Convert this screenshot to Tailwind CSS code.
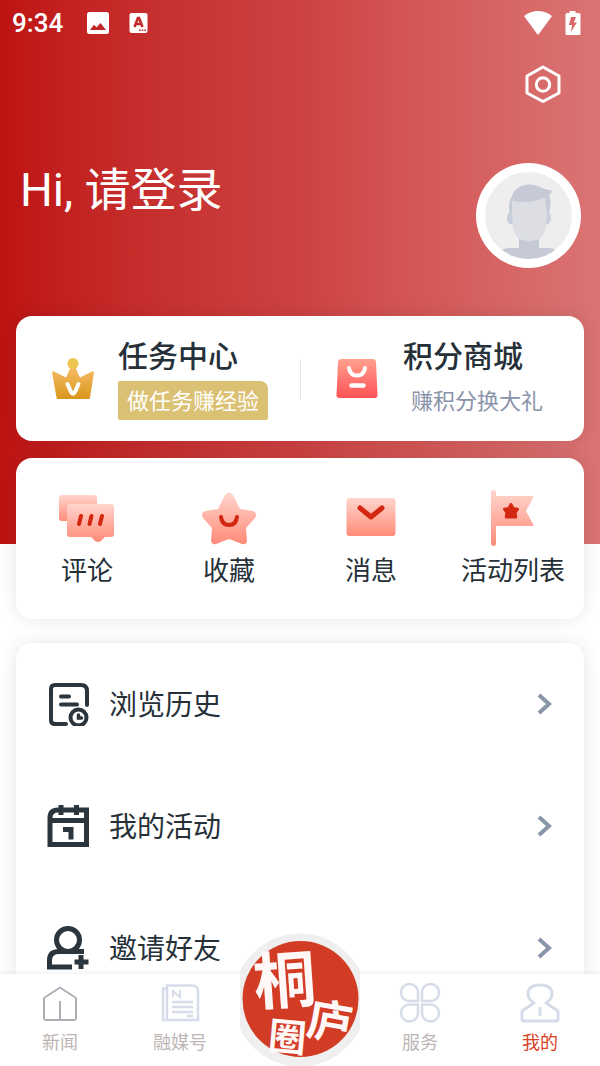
<!DOCTYPE html>
<html lang="zh-CN">
<head>
<meta charset="utf-8">
<meta name="viewport" content="width=device-width, initial-scale=1">
<title>我的</title>
<script src="https://cdn.jsdelivr.net/npm/@tailwindcss/browser@4"></script>
</head>
<body class="flex h-screen flex-col overflow-hidden bg-white font-['Roboto','Noto_Sans_CJK_SC',sans-serif] text-[#263038]">
<main class="min-h-0 flex-1 overflow-y-auto [scrollbar-width:none]">
  <header class="bg-linear-to-r from-[#be1212] via-[#cd4242] to-[#da7474] px-4 pb-[103px] text-white">
    <div class="flex h-[46px] items-center justify-between">
      <div class="flex items-center">
        <time class="-ml-1 w-[75px] text-[26px] leading-8 font-medium">9:34</time>
        <svg class="h-[22px] w-[22px]" viewBox="0 0 22 22" aria-hidden="true"><path fill="#fff" fill-rule="evenodd" d="M2.5 0h17A2.5 2.5 0 0 1 22 2.500v17a2.500 2.500 0 0 1-2.500 2.500h-17A2.500 2.500 0 0 1 0 19.500v-17A2.500 2.500 0 0 1 2.500 0ZM3 18h16l-5.500-7-4 4.500-2.500-2.700Z"/></svg>
        <svg class="ml-5 h-5 w-[19px]" viewBox="0 0 19 20" aria-hidden="true"><rect x=".5" width="18" height="20" rx="2" fill="#fff"/><path fill="none" stroke="#c62b2b" stroke-width="2.600" d="m5.500 14 3.400-9h1.200l3.400 9M7 11h5"/><path stroke="#c62b2b" stroke-width="1.500" stroke-dasharray="1.700 1" d="M10 17.300h7"/></svg>
      </div>
      <div class="flex items-center gap-3 pr-1">
        <svg class="h-6 w-[30px]" viewBox="0 0 30 24" aria-hidden="true"><path fill="#fff" d="M1 5C9-1.700 21-1.700 29 5L15.500 23.500h-1Z"/></svg>
        <svg class="h-6 w-4 -mr-px" viewBox="1 0 16 24" aria-hidden="true"><path fill="#fff" d="M5.500 0h6v2H15a1.500 1.500 0 0 1 1.500 1.500v19A1.500 1.500 0 0 1 15 24H3a1.500 1.500 0 0 1-1.500-1.500v-19A1.500 1.500 0 0 1 3 2h2.500Z"/><path fill="#d66" d="M7 6h5l-2.200 5.500H13L6.800 21l1.400-7H5Z"/></svg>
      </div>
    </div>
    <div class="flex justify-end pt-[18px] pr-[23px]">
      <button type="button" aria-label="设置" class="h-10 w-9"><svg class="h-10 w-9" viewBox="0 0 36 40" fill="none" stroke="#fff" stroke-width="3" stroke-linejoin="round" aria-hidden="true"><path d="M18 3 34 12v17L18 37.500 2 29V12Z"/><circle cx="18" cy="20.500" r="6.700"/></svg></button>
    </div>
    <div class="flex items-start justify-between pt-[59px] pl-1 pr-[3px]">
      <h1><a href="#login" class="block text-[46px] leading-[54px]">Hi, 请登录</a></h1>
      <a href="#profile" aria-label="个人资料">
        <svg class="h-[105px] w-[105px]" viewBox="0 0 105 105" aria-hidden="true">
          <clipPath id="face"><circle cx="52.500" cy="52.500" r="43.500"/></clipPath>
          <circle cx="52.500" cy="52.500" r="52.500" fill="#fff"/>
          <g clip-path="url(#face)"><rect width="105" height="105" fill="#eee"/>
          <path fill="#c5cad6" d="M43 74h20v11h9q9 0 14 7v13H20V92q5-7 14-7h9Z"/>
          <ellipse cx="35" cy="55" rx="4" ry="6.500" fill="#c9cfdd"/><ellipse cx="71" cy="55" rx="4" ry="6.500" fill="#c9cfdd"/>
          <path fill="#c5cad6" d="M34 50q-3-10 3-18-1-3 5-7 11-7 24 0 4 2 6 2l3 0q2 3-2 5 3 7 0 18Z"/>
          <path fill="#dcdee3" d="M36 37q18 4 33-3l2 15-1 16q-3 13-17 13-13 0-16-13l-1-15Z"/>
          <path fill="#c5cad6" d="M36 38q-2-5 5-12 11-8 24-1 4 2 8 2 1 5-6 8-14 6-31 3Z"/></g>
        </svg>
      </a>
    </div>
    <section class="mt-12 grid h-[125px] grid-cols-2 items-center rounded-2xl bg-white shadow-[0_0_18px_#0000001a]">
      <a href="#tasks" class="flex h-full items-center gap-6 pl-9">
        <svg class="h-[42px] w-[42px] shrink-0" viewBox="0 0 42 42" aria-hidden="true"><defs><linearGradient id="gold" x2="0" y2="1"><stop stop-color="#f6bd66"/><stop offset="1" stop-color="#da961c"/></linearGradient></defs><path fill="url(#gold)" d="M0 14q0-1 2-.5l12 6q4-8 4-10h6q0 2 4 10l12-6q2-.5 2 1l-4 25q0 1.500-1.500 1.500h-31Q4.500 41 4.500 39.500Z"/><circle cx="21" cy="5.500" r="5.500" fill="#edc550"/><path fill="none" stroke="#fff" stroke-width="4" stroke-linecap="round" stroke-linejoin="round" d="m15.500 26 3.500 8q2 3.500 4 0l3.500-8"/></svg>
        <div class="text-[#263038]">
          <h2 class="text-[30px] leading-10 font-medium">任务中心</h2>
          <p class="mt-1 flex h-[39px] w-[150px] items-center justify-center rounded-xs rounded-tr-lg bg-[#dbc173] pt-0.5 text-[22px] whitespace-nowrap text-white">做任务赚经验</p>
        </div>
      </a>
      <a href="#mall" class="relative flex h-full items-center gap-[25px] pl-9 before:absolute before:left-0 before:h-10 before:w-px before:bg-[#e6e6e6]">
        <svg class="h-[42px] w-[42px] shrink-0" viewBox="0 0 42 42" aria-hidden="true"><defs><linearGradient id="bag" x2="0" y2="1"><stop stop-color="#ffa08d"/><stop offset="1" stop-color="#ff5156"/></linearGradient></defs><path fill="url(#bag)" d="M5 1h32q2.500 0 3 3l1.500 33q0 3-2.500 3H3q-2.500 0-2.500-3L2 4q.5-3 3-3Z"/><path fill="none" stroke="#fff" stroke-width="4" stroke-linecap="round" d="M13 10q1 7.500 8 7.500t8-7.500"/><path stroke="#fff" stroke-width="4.500" stroke-linecap="round" d="M15.500 27.500h12"/></svg>
        <div>
          <h2 class="text-[30px] leading-10 font-medium text-[#263038]">积分商城</h2>
          <p class="mt-1 flex h-[39px] items-center pt-0.5 pl-2 text-[22px] whitespace-nowrap text-[#8993a9]">赚积分换大礼</p>
        </div>
      </a>
    </section>
  </header>

  <div class="-mt-[86px] px-4">
    <nav aria-label="快捷入口" class="grid h-[161px] grid-cols-4 rounded-2xl bg-white pt-8 shadow-[0_0_18px_#0000001a]">
      <a href="#comments" class="flex flex-col items-center">
        <svg class="h-14 w-14" viewBox="0 0 56 56" aria-hidden="true"><defs><linearGradient id="coral" x2="0" y2="1"><stop stop-color="#ffd5cd"/><stop offset="1" stop-color="#ff8b78"/></linearGradient></defs><rect x="0" y="5" width="38" height="26" rx="3" fill="url(#coral)"/><path fill="url(#coral)" d="M11 14h41q3 0 3 3v27q0 3-3 3h-6l-4 4q-3 2-6 0l-4-4H11q-3 0-3-3V17q0-3 3-3Z"/><path stroke="#d4270f" stroke-width="4" stroke-linecap="round" d="m20 34 2-8M30.500 34l2-8M41 34l2-8"/></svg>
        <span class="text-[26px] leading-[50px] whitespace-nowrap">评论</span>
      </a>
      <a href="#favorites" class="flex flex-col items-center">
        <svg class="h-14 w-14" viewBox="0 0 56 56" aria-hidden="true"><path fill="url(#coral)" d="M24 5q4-5 8 0l7 14 13 2q5 2 2 7l-9 10 1 13q-1 4-5 3l-13-5-13 5q-4 1-5-3l1-13-9-10q-3-5 2-7l13-2Z"/><path fill="none" stroke="#d4270f" stroke-width="4" stroke-linecap="round" d="M20 27q1 8 8 8t8-8"/></svg>
        <span class="text-[26px] leading-[50px] whitespace-nowrap">收藏</span>
      </a>
      <a href="#messages" class="flex flex-col items-center">
        <svg class="h-14 w-14" viewBox="0 0 56 56" aria-hidden="true"><rect x="3.500" y="8" width="49" height="38" rx="3" fill="url(#coral)"/><path fill="none" stroke="#d4270f" stroke-width="5" stroke-linecap="round" stroke-linejoin="round" d="m17 18 11 9 11-9"/></svg>
        <span class="text-[26px] leading-[50px] whitespace-nowrap">消息</span>
      </a>
      <a href="#events" class="flex flex-col items-center">
        <svg class="h-14 w-14" viewBox="0 0 56 56" aria-hidden="true"><path fill="url(#coral)" d="M6 3q0-3 2.500-3T11 3v3h36q2.500 0 1 2l-7 13 7 13q1.500 2-1 2H11v17q0 3-2.500 3T6 53Z"/><path fill="#d4270f" stroke="#d4270f" stroke-width="3" stroke-linejoin="round" d="m26 14.500 2 4 4.500.7-2.500 3.300.7 4.500h-9.400l.7-4.500-2.500-3.300 4.500-.7Z"/></svg>
        <span class="text-[26px] leading-[50px] whitespace-nowrap">活动列表</span>
      </a>
    </nav>

    <ul class="mt-6 rounded-2xl bg-white shadow-[0_0_18px_#0000001a]">
      <li><a href="#history" class="flex h-[122px] items-center pr-[31px] pl-[31px]">
        <svg class="h-11 w-11" viewBox="0 0 44 44" fill="none" stroke="#2b353d" stroke-width="4" stroke-linecap="round" aria-hidden="true"><path d="M40 23V9q0-6-6-6H8Q4 3 4 7v31q0 4 4 4h11M14 14.500h8M14 22.500h16"/><circle cx="31.500" cy="35.500" r="8"/><path stroke-width="3.500" d="M31.500 33v3h3"/></svg>
        <span class="ml-[18px] flex-1 pt-1 text-[28px]">浏览历史</span>
        <svg class="h-6 w-4" viewBox="0 0 16 24" fill="none" stroke="#8995a9" stroke-width="4" aria-hidden="true"><path d="m2 3 10 9-10 9"/></svg>
      </a></li>
      <li><a href="#my-events" class="flex h-[122px] items-center pr-[31px] pl-[31px]">
        <svg class="h-11 w-11" viewBox="0 0 44 44" fill="none" stroke="#2b353d" stroke-width="5" aria-hidden="true"><path d="M3 41V14q0-8 8-8h28.500v34.500H3V16.500h36M14 1v10M29.500 1v10M16 25.500h8v10"/></svg>
        <span class="ml-[18px] flex-1 pt-1 text-[28px]">我的活动</span>
        <svg class="h-6 w-4" viewBox="0 0 16 24" fill="none" stroke="#8995a9" stroke-width="4" aria-hidden="true"><path d="m2 3 10 9-10 9"/></svg>
      </a></li>
      <li><a href="#invite" class="flex h-[122px] items-center pr-[31px] pl-[31px]">
        <svg class="h-11 w-11" viewBox="0 0 44 44" fill="none" stroke="#2b353d" stroke-width="5" aria-hidden="true"><circle cx="21" cy="14" r="11.500"/><path d="M37 25.500H12q-9 0-9.500 8V41H25M34 29v14M27.500 36h14"/></svg>
        <span class="ml-[18px] flex-1 pt-1 text-[28px]">邀请好友</span>
        <svg class="h-6 w-4" viewBox="0 0 16 24" fill="none" stroke="#8995a9" stroke-width="4" aria-hidden="true"><path d="m2 3 10 9-10 9"/></svg>
      </a></li>
    </ul>
  </div>
</main>

<nav aria-label="主导航" class="relative grid h-[92px] shrink-0 grid-cols-5 bg-white pt-2 text-[18px] leading-7 text-[#bdb5b5] shadow-[0_-2px_4px_#0000000d]">
  <a href="#news" class="flex flex-col items-center gap-[5px]">
    <svg class="h-[42px] w-[42px]" viewBox="0 0 42 42" fill="none" stroke="#adb1b7" stroke-width="2" stroke-linejoin="round" aria-hidden="true"><path d="M21 5.500 37 16v20q0 2-2 2H7q-2 0-2-2V16ZM21 19v19"/></svg>新闻
  </a>
  <a href="#media" class="flex flex-col items-center gap-[5px]">
    <svg class="h-[42px] w-[42px]" viewBox="0 0 42 42" fill="none" stroke="#d7dcea" stroke-width="2.500" aria-hidden="true"><path d="M8 3.500h25q6 0 6 6V38H8ZM8 6.500H4V38h4M13 20h21M13 25h21M13 30h21M28 34h6"/><path stroke-width="2" d="M14 15V9l7 6V8"/></svg>融媒号
  </a>
  <a href="#home" aria-label="桐庐圈" class="relative">
    <svg class="absolute -top-[49px] left-1/2 h-[134px] w-[120px] -translate-x-1/2 overflow-visible" viewBox="0 0 120 134" fill="#fff8f7" font-family="'Noto Sans CJK SC',sans-serif" font-weight="700" aria-hidden="true">
      <clipPath id="badge"><rect width="120" height="134"/></clipPath>
      <circle cx="60" cy="67" r="66.500" fill="#efefef" clip-path="url(#badge)"/><circle cx="60.500" cy="66" r="58" fill="#d23c25"/>
      <text x="14" y="70" font-size="62" transform="rotate(-4 45 50)">桐</text>
      <text x="67" y="105" font-size="45" transform="rotate(10 90 90)">庐</text>
      <text x="28" y="118" font-size="38" transform="rotate(5 47 108)">圈</text>
    </svg>
  </a>
  <a href="#services" class="flex flex-col items-center gap-[5px]">
    <svg class="h-[42px] w-[42px]" viewBox="0 0 42 42" fill="none" stroke="#d7dcea" stroke-width="2.500" aria-hidden="true"><path d="M19 19h-8a8.500 8.500 0 1 1 8-8.500ZM23 19h8a8.500 8.500 0 1 0-8-8.500ZM19 22.500h-8a8.500 8.500 0 1 0 8 8.500ZM23 22.500h8a8.500 8.500 0 1 1-8 8.500Z"/></svg>服务
  </a>
  <a href="#me" aria-current="page" class="flex flex-col items-center gap-[5px] text-[#d9401f]">
    <svg class="h-[42px] w-[42px]" viewBox="0 0 42 42" fill="none" stroke="#d7dcea" stroke-width="3" stroke-linejoin="round" aria-hidden="true"><path d="M15 21q-6-4-6-9 0-9 12-9t12 9q0 5-6 9l12 8v8q0 2-2 2H5q-2 0-2-2v-8ZM21 25v9"/></svg>我的
  </a>
</nav>
</body>
</html>
